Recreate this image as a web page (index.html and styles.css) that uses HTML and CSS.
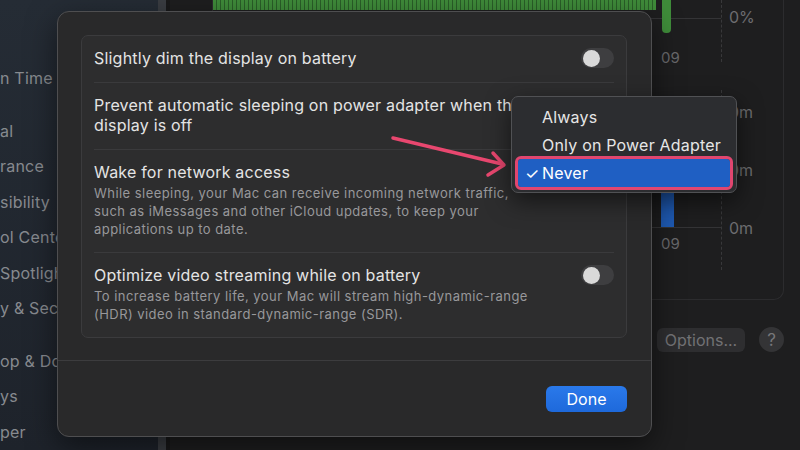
FILE: index.html
```html
<!DOCTYPE html>
<html lang="en">
<head>
  <meta charset="UTF-8" />
  <title>Battery Options</title>
  <link rel="stylesheet" href="styles.css">
</head>
<body>
  <div class="app">
    <nav class="sidebar">
      <div class="side-item">n Time</div>
      <div class="side-item gap">al</div>
      <div class="side-item">rance</div>
      <div class="side-item">sibility</div>
      <div class="side-item">ol Center</div>
      <div class="side-item">Spotlight</div>
      <div class="side-item">y &amp; Security</div>
      <div class="side-item gap">op &amp; Dock</div>
      <div class="side-item">ys</div>
      <div class="side-item">per</div>
    </nav>
    <div class="splitter"></div>

    <main class="main">
      <section class="panel">
        <div class="chart chart-level">
          <div class="plot">
            <div class="bars">
              <div class="stripe"></div>
              <div class="bar-green"></div>
            </div>
            <div class="hour">09</div>
          </div>
          <div class="axis">
            <span>0%</span>
          </div>
        </div>

        <div class="chart chart-usage">
          <div class="plot">
            <div class="bars-usage">
              <div class="bar-blue"></div>
            </div>
            <div class="hour">09</div>
          </div>
          <div class="axis axis-usage">
            <span>0m</span>
            <span>0m</span>
            <span>0m</span>
          </div>
        </div>
      </section>

      <div class="panel-footer">
        <button class="btn-options">Options...</button>
        <button class="btn-help">?</button>
      </div>
    </main>
  </div>

  <div class="modal">
    <div class="modal-body">
      <div class="group">
        <div class="row">
          <div class="row-text">
            <div class="row-title">Slightly dim the display on battery</div>
          </div>
          <span class="toggle"></span>
        </div>
        <div class="row">
          <div class="row-text">
            <div class="row-title">Prevent automatic sleeping on power adapter when the display is off</div>
          </div>
        </div>
        <div class="row">
          <div class="row-text">
            <div class="row-title">Wake for network access</div>
            <div class="row-desc">While sleeping, your Mac can receive incoming network traffic, such as iMessages and other iCloud updates, to keep your applications up to date.</div>
          </div>
        </div>
        <div class="row">
          <div class="row-text">
            <div class="row-title">Optimize video streaming while on battery</div>
            <div class="row-desc">To increase battery life, your Mac will stream high-dynamic-range (HDR) video in standard-dynamic-range (SDR).</div>
          </div>
          <span class="toggle"></span>
        </div>
      </div>
    </div>
    <div class="modal-footer">
      <button class="btn-done">Done</button>
    </div>
  </div>

  <svg class="arrow" width="130" height="60" viewBox="0 0 130 60">
    <path d="M8 13 L117 39" />
    <path d="M108 28 L119 40 L103 50" />
  </svg>

  <ul class="menu">
    <li>Always</li>
    <li>Only on Power Adapter</li>
    <li class="selected"><span class="check">✓</span>Never</li>
  </ul>
</body>
</html>
```

FILE: styles.css
```css
* { box-sizing: border-box; }

body {
  margin: 0;
  width: 800px;
  height: 450px;
  overflow: hidden;
  position: relative;
  background: #1e1e1f;
  font-family: Inter, "Noto Sans", sans-serif;
  color: #e6e6e6;
}

.app {
  display: flex;
  height: 450px;
}

/* sidebar behind the sheet */
.sidebar {
  width: 158px;
  flex-shrink: 0;
  overflow: hidden;
  padding-top: 61px;
  background: linear-gradient(180deg, #252c35, #1e232b);
}

.side-item {
  height: 35.5px;
  line-height: 35.5px;
  white-space: nowrap;
  font-size: 16px;
  letter-spacing: 0.2px;
  color: #878a8f;
}

.side-item.gap {
  margin-top: 17px;
}

.splitter {
  width: 12px;
  flex-shrink: 0;
  background: #3a3d42;
  border-right: 4px solid #19191a;
}

.main {
  flex: 1;
  padding: 0 18px 0 42px;
  display: flex;
  flex-direction: column;
}

.panel {
  height: 300px;
  border: 1px solid #2c2c2e;
  border-top: none;
  border-radius: 0 0 10px 10px;
}

.chart {
  display: flex;
}

.plot {
  width: 508px;
}

.bars {
  height: 42px;
  display: flex;
  align-items: flex-start;
  background: linear-gradient(#343436, #343436) no-repeat 0 18px / 100% 1px;
}

.stripe {
  width: 443px;
  height: 10px;
  background: repeating-linear-gradient(90deg, #3f8c3a 0 3px, #2a5f28 3px 4px);
}

.bar-green {
  width: 9px;
  height: 33px;
  margin-left: 6px;
  background: #3f8c3a;
  border-radius: 0 0 4px 4px;
}

.hour {
  padding-left: 448px;
  margin-top: 8px;
  line-height: 16px;
  font-size: 15px;
  color: #68686b;
}

.axis {
  width: 62px;
  height: 62px;
  border-left: 1px dashed #38383a;
  padding: 8px 0 0 7px;
  font-size: 16px;
  line-height: 18px;
  color: #6c6c6f;
}

.chart-usage {
  margin-top: 24px;
}

.bars-usage {
  height: 138px;
  display: flex;
  align-items: flex-end;
  padding-left: 448px;
  border-bottom: 1px solid #343436;
}

.bar-blue {
  width: 13px;
  height: 38px;
  background: #1f5bb5;
}

.axis-usage {
  height: 180px;
  display: flex;
  flex-direction: column;
  gap: 40px;
  padding-top: 13px;
}

.panel-footer {
  display: flex;
  justify-content: flex-end;
  align-items: center;
  gap: 14px;
  margin-top: 27px;
}

.btn-options {
  width: 88px;
  height: 24px;
  border: none;
  border-radius: 6px;
  background: #2e2e30;
  font-family: inherit;
  font-size: 16px;
  color: #727275;
}

.btn-help {
  width: 25px;
  height: 25px;
  border: none;
  border-radius: 50%;
  background: #343436;
  font-family: inherit;
  font-size: 17px;
  color: #77777a;
}

/* sheet */
.modal {
  position: absolute;
  left: 57px;
  top: 11px;
  width: 595px;
  height: 426px;
  display: flex;
  flex-direction: column;
  background: #29292a;
  border: 1px solid #4e4e50;
  border-radius: 12px;
  box-shadow: 0 10px 30px rgba(0, 0, 0, 0.5);
}

.modal-body {
  flex: 1;
  padding: 23px 24px 0 23px;
}

.group {
  background: #2d2d2e;
  border: 1px solid #3b3b3d;
  border-radius: 7px;
}

.row {
  display: flex;
  justify-content: space-between;
  align-items: flex-start;
  margin: 0 12px;
  padding: 12px 0 14px;
}

.row + .row {
  border-top: 1px solid #3a3a3c;
}

.row-text {
  max-width: 440px;
}

.row-title {
  font-size: 16px;
  line-height: 20px;
  letter-spacing: 0.2px;
  color: #e4e4e4;
}

.row-desc {
  margin-top: 2px;
  font-size: 13px;
  line-height: 18px;
  letter-spacing: 0.45px;
  color: #98989b;
}

.toggle {
  width: 33px;
  height: 20px;
  display: flex;
  align-items: center;
  padding: 0 2px;
  border-radius: 10px;
  background: #3e3e40;
}

.toggle::after {
  content: "";
  width: 17px;
  height: 17px;
  border-radius: 50%;
  background: #d9d9d9;
}

.modal-footer {
  height: 76px;
  border-top: 1px solid #3c3c3e;
  padding: 25px 24px 0 0;
  display: flex;
  justify-content: flex-end;
  align-items: flex-start;
}

.btn-done {
  width: 81px;
  height: 26px;
  border: none;
  border-radius: 6px;
  background: linear-gradient(#2a79ea, #1e69db);
  font-family: inherit;
  font-size: 16px;
  color: #fff;
}

/* annotation arrow */
.arrow {
  position: absolute;
  left: 385px;
  top: 125px;
}

.arrow path {
  fill: none;
  stroke: #e8476f;
  stroke-width: 3.5;
  stroke-linecap: round;
  stroke-linejoin: round;
}

/* popup menu */
.menu {
  position: absolute;
  left: 511px;
  top: 96px;
  width: 226px;
  margin: 0;
  padding: 6px 6px 5px;
  list-style: none;
  background: #2c2d30;
  border: 1px solid #505154;
  border-radius: 7px;
  box-shadow: 0 8px 24px rgba(0, 0, 0, 0.55);
}

.menu li {
  height: 28px;
  line-height: 28px;
  padding-left: 24px;
  font-size: 16px;
  letter-spacing: 0.2px;
  color: #e6e6e6;
}

.menu li.selected {
  background: #1f5fc3;
  border-radius: 3px;
  outline: 3px solid #e1466f;
  color: #fff;
}

.check {
  display: inline-block;
  width: 17px;
  margin-left: -17px;
}
```
